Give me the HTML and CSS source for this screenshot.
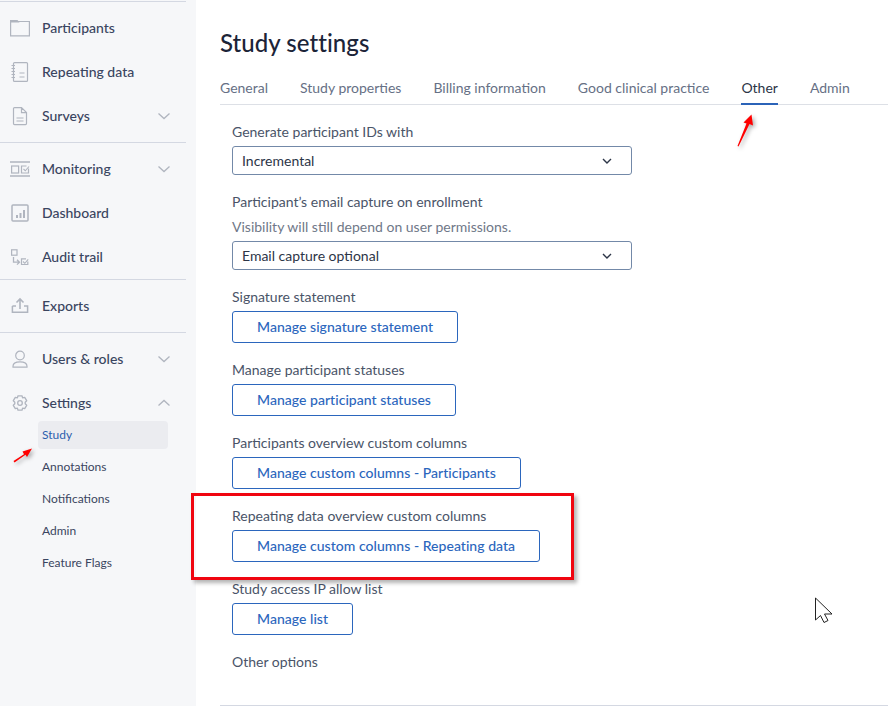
FILE: index.html
```html
<!DOCTYPE html>
<html lang="en">
<head>
<meta charset="utf-8">
<title>Study settings</title>
<link rel="stylesheet" href="styles.css">
</head>
<body>
<div class="app">
  <nav class="sidebar">
    <div class="group">
      <a class="item"><svg class="ico" width="20" height="20" viewBox="0 0 20 20"><path d="M.6 3.500h18.800v14.400H.6z" fill="none" stroke="#b0b5bf" stroke-width="1.200"/><path d="M0 4.500V2h7.500l2 2.500z" fill="#b0b5bf"/></svg><span class="label">Participants</span></a>
      <a class="item"><svg class="ico" width="20" height="20" viewBox="0 0 20 20"><rect x="3.500" y="0.600" width="14" height="18.800" rx="1" fill="none" stroke="#b0b5bf" stroke-width="1.200"/><path d="M1.500 3.500h3.500M1.500 6.500h3.500M1.500 9.500h3.500M1.500 12.500h3.500M1.500 15.500h3.500M9.500 11h5M9.500 15h5" stroke="#b0b5bf" fill="none" stroke-width="1.100"/></svg><span class="label">Repeating data</span></a>
      <a class="item"><svg class="ico" width="20" height="20" viewBox="0 0 20 20"><path d="M4.500 1.600h7l5 5v11a1 1 0 0 1-1 1h-11a1 1 0 0 1-1-1v-15a1 1 0 0 1 1-1zM11.500 1.600v5h5M6.500 12h7M6.500 15h7" fill="none" stroke="#b0b5bf" stroke-width="1.200"/></svg><span class="label">Surveys</span><svg class="chev" width="14" height="8" viewBox="0 0 14 8"><path d="M1.500 1.500 7 6.500l5.500-5" fill="none" stroke="#b0b5bf" stroke-width="1.300"/></svg></a>
    </div>
    <div class="group group-flush">
      <a class="item"><svg class="ico" width="20" height="20" viewBox="0 0 20 20"><path d="M0 3h20M0 17h20" stroke="#b0b5bf" fill="none" stroke-width="1.500"/><rect x="1.600" y="7" width="7" height="7" fill="none" stroke="#b0b5bf" stroke-width="1.200"/><path d="M18.500 9.500V14h-7V7h5" fill="none" stroke="#b0b5bf" stroke-width="1.200"/><path d="m13.500 10 1.800 1.800 3.700-4.300" fill="none" stroke="#b0b5bf" stroke-width="1.100"/></svg><span class="label">Monitoring</span><svg class="chev" width="14" height="8" viewBox="0 0 14 8"><path d="M1.500 1.500 7 6.500l5.500-5" fill="none" stroke="#b0b5bf" stroke-width="1.300"/></svg></a>
      <a class="item"><svg class="ico" width="20" height="20" viewBox="0 0 20 20"><rect x="2" y="2" width="16" height="16" rx="1" fill="none" stroke="#b0b5bf" stroke-width="1.500"/><path d="M6 12h2v3H6zM9.500 10h2v5h-2zM13 7h2v8h-2z" fill="#b0b5bf"/></svg><span class="label">Dashboard</span></a>
      <a class="item"><svg class="ico" width="20" height="20" viewBox="0 0 20 20"><rect x="1.600" y="2.800" width="5.400" height="5.400" fill="none" stroke="#b0b5bf" stroke-width="1.200"/><path d="M3.500 10v5.200H9M7 12.800l2.500 2.400L7 17.600" fill="none" stroke="#b0b5bf" stroke-width="1.300"/><path d="M17.800 14.500v3H11.500v-5.600h4.500" fill="none" stroke="#b0b5bf" stroke-width="1.200"/><path d="m13 14.500 1.800 1.800 3.400-4" fill="none" stroke="#b0b5bf" stroke-width="1.100"/></svg><span class="label">Audit trail</span></a>
    </div>
    <div class="group">
      <a class="item"><svg class="ico" width="20" height="20" viewBox="0 0 20 20"><path d="M2.400 10v6.300h15.200V10H14M6 10H2.400" fill="none" stroke="#b0b5bf" stroke-width="1.500"/><path d="M10 13V3M6.500 6.500 10 3l3.500 3.500" fill="none" stroke="#b0b5bf" stroke-width="1.600"/></svg><span class="label">Exports</span></a>
    </div>
    <div class="group">
      <a class="item"><svg class="ico" width="20" height="20" viewBox="0 0 20 20"><circle cx="10" cy="6.500" r="4.300" fill="none" stroke="#b0b5bf" stroke-width="1.200"/><path d="M3 18.200v-1c0-2.800 3-4.400 7-4.400s7 1.600 7 4.400v1z" fill="none" stroke="#b0b5bf" stroke-width="1.200"/></svg><span class="label">Users &amp; roles</span><svg class="chev" width="14" height="8" viewBox="0 0 14 8"><path d="M1.500 1.500 7 6.500l5.500-5" fill="none" stroke="#b0b5bf" stroke-width="1.300"/></svg></a>
      <a class="item"><svg class="ico" width="20" height="20" viewBox="0 0 20 20"><path d="M8 2.800h4l.6 2.100 2.100-.6 2 3.400-1.500 1.500v1.600l1.500 1.500-2 3.400-2.100-.6-.6 2.100H8l-.6-2.100-2.100.6-2-3.400 1.500-1.500V9.200L3.300 7.700l2-3.400 2.100.6z" fill="none" stroke="#b0b5bf" stroke-width="1.300" stroke-linejoin="round"/><circle cx="10" cy="10" r="2.300" fill="none" stroke="#b0b5bf" stroke-width="1.300"/></svg><span class="label">Settings</span><svg class="chev" width="14" height="8" viewBox="0 0 14 8"><path d="M1.500 6.500 7 1.500l5.500 5" fill="none" stroke="#b0b5bf" stroke-width="1.300"/></svg></a>
      <div class="sub">
        <a class="sub-item is-active">Study</a>
        <a class="sub-item">Annotations</a>
        <a class="sub-item">Notifications</a>
        <a class="sub-item">Admin</a>
        <a class="sub-item">Feature Flags</a>
      </div>
    </div>
  </nav>
  <main class="main">
    <h1 class="title">Study settings</h1>
    <div class="tabs">
      <a class="tab">General</a>
      <a class="tab">Study properties</a>
      <a class="tab">Billing information</a>
      <a class="tab">Good clinical practice</a>
      <a class="tab is-active">Other</a>
      <a class="tab">Admin</a>
    </div>
    <div class="form">
      <div class="field">
        <div class="field-label">Generate participant IDs with</div>
        <div class="select">Incremental<svg width="10" height="6" viewBox="0 0 10 6"><path d="M1 1l4 4 4-4" fill="none" stroke="#2c3547" stroke-width="1.400"/></svg></div>
      </div>
      <div class="field">
        <div class="field-label">Participant’s email capture on enrollment</div>
        <div class="hint">Visibility will still depend on user permissions.</div>
        <div class="select">Email capture optional<svg width="10" height="6" viewBox="0 0 10 6"><path d="M1 1l4 4 4-4" fill="none" stroke="#2c3547" stroke-width="1.400"/></svg></div>
      </div>
      <div class="field">
        <div class="field-label">Signature statement</div>
        <button class="btn">Manage signature statement</button>
      </div>
      <div class="field">
        <div class="field-label">Manage participant statuses</div>
        <button class="btn">Manage participant statuses</button>
      </div>
      <div class="field">
        <div class="field-label">Participants overview custom columns</div>
        <button class="btn">Manage custom columns - Participants</button>
      </div>
      <div class="field">
        <div class="field-label">Repeating data overview custom columns</div>
        <button class="btn">Manage custom columns - Repeating data</button>
      </div>
      <div class="field">
        <div class="field-label">Study access IP allow list</div>
        <button class="btn">Manage list</button>
      </div>
      <div class="field">
        <div class="field-label">Other options</div>
      </div>
    </div>
    <div class="bottom-rule"></div>
  </main>
  <div class="callout"></div>
  <svg class="arrow arrow-study" width="20" height="15" viewBox="0 0 20 15"><path d="M.5 13 11 6.200 9.500 3.500 19 .5l-5 8.500-1.500-2.300L1.500 14.500z" fill="#f00"/></svg>
  <svg class="arrow arrow-other" width="18" height="33" viewBox="0 0 18 33"><path d="M.5 32 9.500 9.500 6.500 8.500 14.500.5l1.500 11-3.500-1.500L1.500 32.500z" fill="#f00"/></svg>
  <svg class="cursor" width="20" height="28" viewBox="0 0 20 28"><path d="M1.500 1v22l5-4.500 3.500 7 4-2-3.500-6.500H18z" fill="#fff" stroke="#222" stroke-width="1"/></svg>
</div>
</body>
</html>
```

FILE: styles.css
```css
* { box-sizing: border-box; }
html, body { margin: 0; padding: 0; height: 100%; overflow: hidden; background: #fff; }
body { font-family: Lato, "Open Sans", sans-serif; color: #3a4356; }
.app { position: relative; display: flex; width: 888px; height: 706px; overflow: hidden; }

.sidebar { width: 196px; flex: none; background: #f6f7f9; padding: 1px 10px 0 0; }
.group { border-top: 1px solid #d4d8e2; padding: 4px 0; }
.group-flush { padding-bottom: 0; }
.item { display: flex; align-items: center; height: 44px; padding-left: 10px; position: relative; }
.ico { flex: none; width: 20px; height: 20px; }
.label { margin-left: 12px; padding-bottom: 2px; font-size: 14px; font-weight: 500; color: #3a4560; flex: 1; }
.chev { flex: none; margin-right: 15px; }
.sub { margin-top: -4px; padding-left: 38px; padding-right: 18px; }
.sub-item { display: flex; align-items: center; height: 28px; margin-bottom: 4px; padding: 0 0 2px 4px; font-size: 12px; color: #3a4560; border-radius: 4px; }
.sub-item.is-active { background: #ebecf0; color: #2b5fae; }

.main { flex: 1; min-width: 0; padding: 0 0 0 24px; display: flex; flex-direction: column; }
.title { margin: 27px 0 0; font-size: 24px; line-height: 32px; font-weight: 500; letter-spacing: .05px; color: #1c2438; }
.tabs { display: flex; gap: 32px; margin-top: 19px; height: 27px; border-bottom: 1px solid #dde0e6; }
.tab { height: 26px; font-size: 14px; line-height: 18px; color: #667085; border-bottom: 2px solid transparent; margin-bottom: -1px; padding-top: 1px; }
.tab.is-active { color: #2c3547; border-bottom-color: #2b63b8; height: 27px; }

.form { padding: 17px 0 0 12px; display: flex; flex-direction: column; gap: 17px; }
.field-label { font-size: 14px; line-height: 20px; color: #4a5468; }
.hint { font-size: 14px; line-height: 20px; margin-top: 5px; color: #6f7888; }
.select { display: flex; align-items: center; justify-content: space-between; width: 400px; height: 29px; margin-top: 4px; padding: 0 19px 0 9px; border: 1px solid #7389a8; border-radius: 3px; font-size: 14px; color: #2c3547; background: #fff; }
.btn { display: block; height: 32px; margin-top: 4px; padding: 0 24px 2px; border: 1px solid #2b66bd; border-radius: 3px; background: #fff; color: #2b66bd; font: 500 14px Lato, "Open Sans", sans-serif; letter-spacing: .03px; }
.bottom-rule { margin-top: auto; height: 1px; background: #d4d8e2; }

.callout { position: absolute; left: 191px; top: 493px; width: 383px; height: 87px; border: 3px solid #f00510; box-shadow: 3px 3px 4px rgba(0,0,0,.3); }
.arrow { position: absolute; filter: drop-shadow(2px 2px 2px rgba(0,0,0,.35)); }
.arrow-study { left: 13px; top: 448px; }
.arrow-other { left: 737px; top: 114px; }
.cursor { position: absolute; left: 814px; top: 597px; }
```
